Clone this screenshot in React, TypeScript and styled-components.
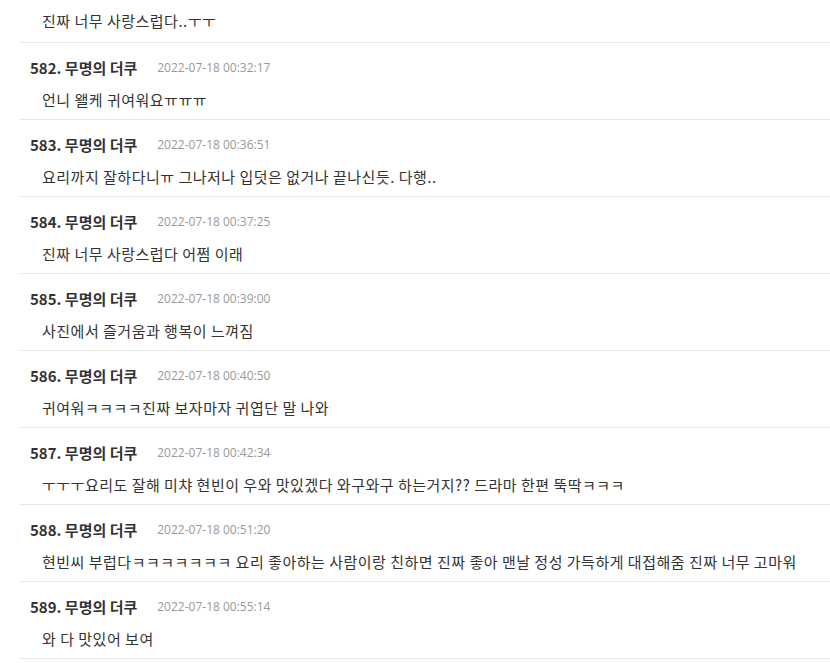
import React from "react";
import styled, { createGlobalStyle } from "styled-components";

const Global = createGlobalStyle`
  html, body { margin: 0; padding: 0; background: #fff; }
  body { font-family: "Noto Sans CJK KR", "Noto Sans", sans-serif; color: #333; }
`;

const List = styled.div`
  display: flex;
  flex-direction: column;
  padding-left: 19px;
  width: 811px;
`;

const Item = styled.div<{ $continued?: boolean }>`
  display: flex;
  flex-direction: column;
  gap: 13px;
  padding: ${(p) => (p.$continued ? "11px 0 11px 11px" : "14px 0 9px 11px")};
  border-bottom: 1px solid #e9e9e9;
`;

const Header = styled.div`
  display: flex;
  align-items: center;
  gap: 20px;
  height: 20px;
`;

const Author = styled.span`
  font-weight: 700;
  font-size: 15px;
  color: #333;
  white-space: nowrap;
`;

const DateText = styled.span`
  font-family: "Open Sans", "Noto Sans", sans-serif;
  font-size: 12px;
  color: #999;
  white-space: nowrap;
`;

const Body = styled.div`
  font-size: 15px;
  line-height: 20px;
  height: 20px;
  padding-left: 12px;
  letter-spacing: 0.5px;
  color: #333;
  white-space: nowrap;
`;

const comments = [
  { n: 582, d: "2022-07-18 00:32:17", t: "언니 왤케 귀여워요ㅠㅠㅠ" },
  { n: 583, d: "2022-07-18 00:36:51", t: "요리까지 잘하다니ㅠ 그나저나 입덧은 없거나 끝나신듯. 다행.." },
  { n: 584, d: "2022-07-18 00:37:25", t: "진짜 너무 사랑스럽다 어쩜 이래" },
  { n: 585, d: "2022-07-18 00:39:00", t: "사진에서 즐거움과 행복이 느껴짐" },
  { n: 586, d: "2022-07-18 00:40:50", t: "귀여워ㅋㅋㅋㅋ진짜 보자마자 귀엽단 말 나와" },
  { n: 587, d: "2022-07-18 00:42:34", t: "ㅜㅜㅜ요리도 잘해 미챠 현빈이 우와 맛있겠다 와구와구 하는거지?? 드라마 한편 뚝딱ㅋㅋㅋ" },
  { n: 588, d: "2022-07-18 00:51:20", t: "현빈씨 부럽다ㅋㅋㅋㅋㅋㅋㅋ 요리 좋아하는 사람이랑 친하면 진짜 좋아 맨날 정성 가득하게 대접해줌 진짜 너무 고마워" },
  { n: 589, d: "2022-07-18 00:55:14", t: "와 다 맛있어 보여" },
];

export default function App() {
  return (
    <>
      <Global />
      <List>
        <Item $continued>
          <Body>진짜 너무 사랑스럽다..ㅜㅜ</Body>
        </Item>
        {comments.map((c) => (
          <Item key={c.n}>
            <Header>
              <Author>{c.n}. 무명의 더쿠</Author>
              <DateText>{c.d}</DateText>
            </Header>
            <Body>{c.t}</Body>
          </Item>
        ))}
      </List>
    </>
  );
}
